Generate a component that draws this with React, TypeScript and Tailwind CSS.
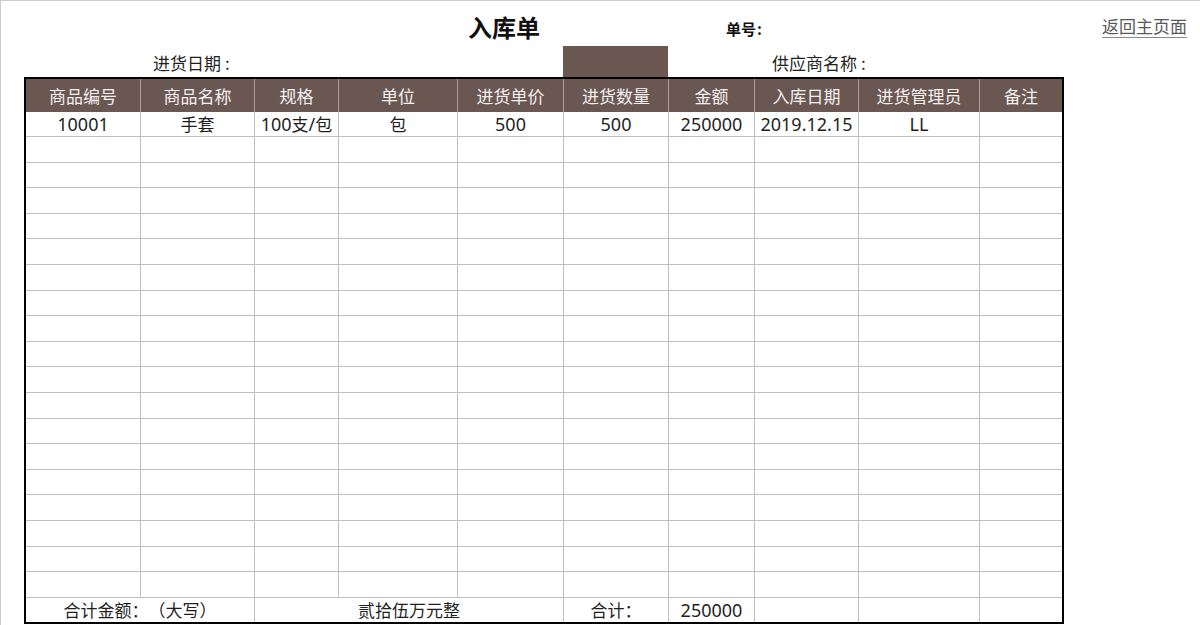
import React from "react";

const headers = ["商品编号", "商品名称", "规格", "单位", "进货单价", "进货数量", "金额", "入库日期", "进货管理员", "备注"];

const Num = ({ children }: { children: React.ReactNode }) => (
  <span className="text-[18px] font-['Noto_Sans',sans-serif]">{children}</span>
);

export default function App() {
  const emptyRows = Array.from({ length: 18 });
  const firstRow: React.ReactNode[] = [
    <Num>10001</Num>,
    "手套",
    <>
      <Num>100</Num>支<Num>/</Num>包
    </>,
    "包",
    <Num>500</Num>,
    <Num>500</Num>,
    <Num>250000</Num>,
    <Num>2019.12.15</Num>,
    <Num>LL</Num>,
    "",
  ];
  return (
    <div className="w-[1200px] h-[625px] overflow-hidden bg-white border-t border-l border-[#cccccc] text-[#1f1f1f] [text-spacing-trim:space-all] font-['Noto_Sans_CJK_SC','Noto_Sans',sans-serif]">
      {/* title row */}
      <div className="flex h-[45px]">
        <div className="w-[338px] shrink-0" />
        <div className="w-[330px] shrink-0 pt-[12px] text-center text-[24px] leading-[28px] font-bold text-[#111111]">入库单</div>
        <div className="w-[57px] shrink-0" />
        <div className="pt-[18px] text-[15px] leading-[20px] font-bold text-[#111111]">
          单号<span className="ml-[1px]">:</span>
        </div>
        <div className="ml-auto mr-[13px] pt-[14px] text-[17px] leading-[22px] text-[#595959] underline underline-offset-[4px] decoration-[#8a8a8a]">返回主页面</div>
      </div>
      {/* second row */}
      <div className="flex h-[31px]">
        <div className="w-[152px] shrink-0" />
        <div className="w-[410px] shrink-0 pt-[6px] text-[17px] leading-[22px]">
          进货日期<span className="ml-[4px]">:</span>
        </div>
        <div className="w-[105px] shrink-0 h-full bg-[#6b5752]" />
        <div className="w-[104px] shrink-0" />
        <div className="pt-[6px] text-[17px] leading-[22px]">
          供应商名称<span className="ml-[4px]">:</span>
        </div>
      </div>
      {/* table */}
      <div className="ml-[23px] w-[1040px] border-2 border-black text-[17px] leading-none">
        <div className="grid grid-cols-[115px_114px_84px_119px_106px_105px_86px_104px_121px_82px] h-[32.5px] bg-[#6b5752] text-[#f3f0ef]">
          {headers.map((h, i) => (
            <div
              key={i}
              className={i < 9 ? "flex items-center justify-center border-r border-[#ab9d99]" : "flex items-center justify-center"}
            >
              {h}
            </div>
          ))}
        </div>
        <div className="grid grid-cols-[115px_114px_84px_119px_106px_105px_86px_104px_121px_82px] h-[25.6px] border-b border-[#c0c0c0]">
          {firstRow.map((v, i) => (
            <div
              key={i}
              className={i < 9 ? "flex items-center justify-center border-r border-[#c0c0c0]" : "flex items-center justify-center"}
            >
              {v}
            </div>
          ))}
        </div>
        {emptyRows.map((_, r) => (
          <div
            key={r}
            className="grid grid-cols-[115px_114px_84px_119px_106px_105px_86px_104px_121px_82px] h-[25.6px] border-b border-[#c0c0c0]"
          >
            {headers.map((_, i) => (
              <div key={i} className={i < 9 ? "border-r border-[#c0c0c0]" : ""} />
            ))}
          </div>
        ))}
        <div className="grid grid-cols-[115px_114px_84px_119px_106px_105px_86px_104px_121px_82px] h-[24px]">
          <div className="col-span-2 flex items-center justify-center border-r border-[#c0c0c0]">合计金额：（大写）</div>
          <div className="col-span-3 flex items-center justify-center border-r border-[#c0c0c0]">贰拾伍万元整</div>
          <div className="flex items-center justify-center border-r border-[#c0c0c0]">合计：</div>
          <div className="flex items-center justify-center border-r border-[#c0c0c0]">
            <Num>250000</Num>
          </div>
          <div className="border-r border-[#c0c0c0]" />
          <div className="border-r border-[#c0c0c0]" />
          <div />
        </div>
      </div>
    </div>
  );
}
